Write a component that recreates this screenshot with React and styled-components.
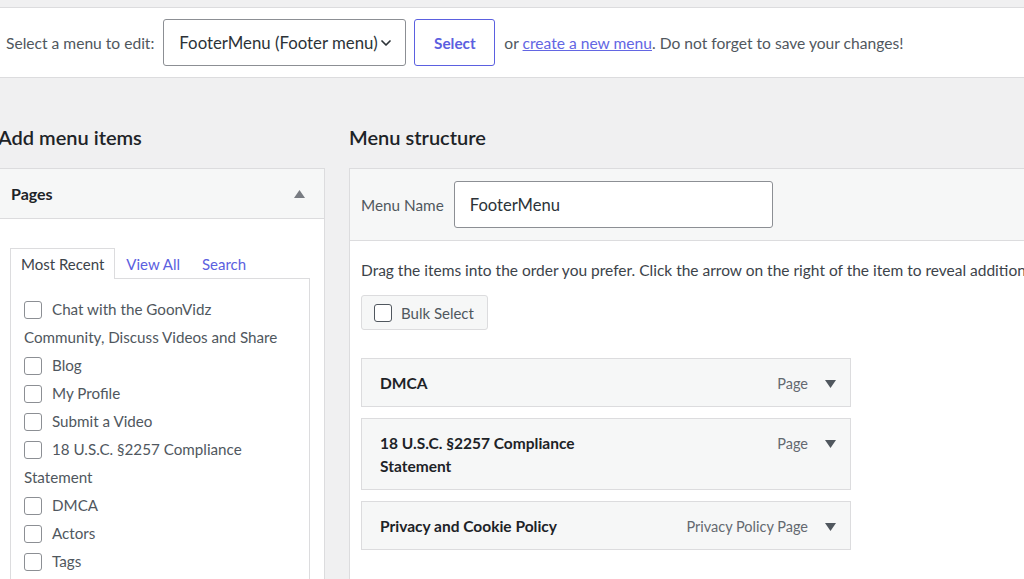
import React from "react";
import styled, { createGlobalStyle } from "styled-components";
import { ChevronDown } from "lucide-react";

const GlobalStyle = createGlobalStyle`
  body {
    margin: 0;
    background: #f0f0f1;
    font-family: Lato, "Noto Sans", sans-serif;
    color: #3c434a;
    overflow: hidden;
  }
`;

const pages = [
  "Chat with the GoonVidz Community, Discuss Videos and Share",
  "Blog",
  "My Profile",
  "Submit a Video",
  "18 U.S.C. §2257 Compliance Statement",
  "DMCA",
  "Actors",
  "Tags",
];

const menuItems = [
  { title: "DMCA", type: "Page" },
  { title: "18 U.S.C. §2257 Compliance Statement", type: "Page" },
  { title: "Privacy and Cookie Policy", type: "Privacy Policy Page" },
];

const Arrow = ({ up, color }) => (
  <svg width="11" height="8" viewBox="0 0 11 8">
    <polygon points={up ? "0,8 11,8 5.5,0" : "0,0 11,0 5.5,8"} fill={color} />
  </svg>
);

const App = () => {
  return (
    <Page>
      <GlobalStyle />
      <ManageBar>
        <BarLabel>Select a menu to edit:</BarLabel>
        <MenuSelect>
          FooterMenu (Footer menu)
          <ChevronDown size={16} strokeWidth={2.6} color="#2c3338" />
        </MenuSelect>
        <OutlineButton>Select</OutlineButton>
        <BarText>
          or <a href="#">create a new menu</a>. Do not forget to save your changes!
        </BarText>
      </ManageBar>

      <Columns>
        <LeftCol>
          <Heading $indent={10}>Add menu items</Heading>
          <Panel>
            <PanelHeader>
              Pages
              <Arrow up color="#787c82" />
            </PanelHeader>
            <PanelBody>
              <Tabs>
                <Tab $active>Most Recent</Tab>
                <Tab>View All</Tab>
                <Tab>Search</Tab>
              </Tabs>
              <TabPanel>
                {pages.map((p) => (
                  <PageRow key={p}>
                    <Check />
                    {p}
                  </PageRow>
                ))}
              </TabPanel>
            </PanelBody>
          </Panel>
        </LeftCol>

        <RightCol>
          <Heading>Menu structure</Heading>
          <MenuPanel>
            <MenuHeader>
              <NameLabel>Menu Name</NameLabel>
              <NameInput>FooterMenu</NameInput>
            </MenuHeader>
            <MenuBody>
              <Hint>
                Drag the items into the order you prefer. Click the arrow on the right of the item to reveal additional configuration options.
              </Hint>
              <BulkButton>
                <Check $dark />
                Bulk Select
              </BulkButton>
              <ItemList>
                {menuItems.map((m) => (
                  <MenuItem key={m.title}>
                    <ItemTitle>{m.title}</ItemTitle>
                    <ItemControls>
                      <ItemType>{m.type}</ItemType>
                      <Arrow color="#50575e" />
                    </ItemControls>
                  </MenuItem>
                ))}
              </ItemList>
            </MenuBody>
          </MenuPanel>
        </RightCol>
      </Columns>
    </Page>
  );
};

export default App;

const Page = styled.div`
  width: 1024px;
  height: 579px;
  overflow: hidden;
  padding-top: 7px;
  box-sizing: border-box;
`;

const ManageBar = styled.div`
  height: 69px;
  background: #fff;
  border-top: 1px solid #dcdcde;
  border-bottom: 1px solid #dcdcde;
  display: flex;
  align-items: center;
  padding-left: 6px;
  font-size: 15.6px;
`;

const BarLabel = styled.span`
  color: #50575e;
  margin-right: 9px;
`;

const MenuSelect = styled.div`
  width: 243px;
  height: 47px;
  box-sizing: border-box;
  border: 1px solid #8c8f94;
  border-radius: 3px;
  display: flex;
  align-items: center;
  justify-content: space-between;
  padding: 0 11px 0 15px;
  font-size: 16.8px;
  color: #2c3338;
`;

const OutlineButton = styled.button`
  width: 81px;
  height: 47px;
  margin-left: 8px;
  background: #fff;
  border: 1px solid #5b60e0;
  border-radius: 3px;
  color: #5b60e0;
  font-family: inherit;
  font-size: 15.3px;
  font-weight: 700;
`;

const BarText = styled.span`
  margin-left: 9px;
  color: #50575e;

  a {
    color: #6366e3;
  }
`;

const Columns = styled.div`
  display: flex;
  gap: 24px;
  margin-left: -12px;
`;

const LeftCol = styled.div`
  width: 337px;
  flex-shrink: 0;
`;

const RightCol = styled.div`
  width: 800px;
  flex-shrink: 0;
`;

const Heading = styled.h2`
  margin: 0;
  padding: 45px 0 17px ${(p) => p.$indent || 0}px;
  height: 28px;
  line-height: 28px;
  font-size: 20px;
  font-weight: 600;
  color: #1d2327;
`;

const Panel = styled.div`
  background: #fff;
  border: 1px solid #dcdcde;
  height: 460px;
`;

const PanelHeader = styled.div`
  height: 49px;
  background: #f6f7f7;
  border-bottom: 1px solid #dcdcde;
  display: flex;
  align-items: center;
  justify-content: space-between;
  padding: 0 19px 0 22px;
  font-size: 16px;
  font-weight: 700;
  color: #1d2327;
`;

const PanelBody = styled.div`
  padding: 29px 14px 0 21px;
`;

const Tabs = styled.div`
  display: flex;
  height: 31px;
`;

const Tab = styled.div`
  position: relative;
  z-index: 1;
  height: ${(p) => (p.$active ? "31px" : "30px")};
  line-height: 30px;
  padding: 0 10px;
  box-sizing: border-box;
  font-size: 15px;
  background: ${(p) => (p.$active ? "#fff" : "transparent")};
  border: 1px solid ${(p) => (p.$active ? "#dcdcde" : "transparent")};
  border-bottom: none;
  color: ${(p) => (p.$active ? "#3c434a" : "#5b60e0")};
`;

const TabPanel = styled.div`
  margin-top: -1px;
  border: 1px solid #dcdcde;
  padding: 16px 25px 0 13px;
  height: 400px;
`;

const PageRow = styled.div`
  font-size: 15.2px;
  line-height: 28px;
  color: #50575e;
`;

const Check = styled.span`
  display: inline-block;
  width: 18px;
  height: 18px;
  box-sizing: border-box;
  border: 1px solid ${(p) => (p.$dark ? "#50575e" : "#8c8f94")};
  border-radius: 3px;
  background: #fff;
  vertical-align: -4px;
  margin-right: 10px;
`;

const MenuPanel = styled.div`
  background: #fff;
  border: 1px solid #dcdcde;
  height: 460px;
`;

const MenuHeader = styled.div`
  height: 71px;
  background: #f6f7f7;
  border-bottom: 1px solid #dcdcde;
  display: flex;
  align-items: center;
  padding-left: 11px;
`;

const NameLabel = styled.span`
  font-size: 15.3px;
  color: #50575e;
  margin-right: 10px;
`;

const NameInput = styled.div`
  width: 319px;
  height: 47px;
  box-sizing: border-box;
  background: #fff;
  border: 1px solid #8c8f94;
  border-radius: 3px;
  display: flex;
  align-items: center;
  padding-left: 15px;
  font-size: 16.6px;
  color: #2c3338;
`;

const MenuBody = styled.div`
  padding: 18px 11px 0;
`;

const Hint = styled.p`
  margin: 0;
  font-size: 15.5px;
  line-height: 22px;
  white-space: nowrap;
  color: #3c434a;
`;

const BulkButton = styled.div`
  margin-top: 14px;
  width: 127px;
  height: 35px;
  box-sizing: border-box;
  background: #f6f7f7;
  border: 1px solid #dcdcde;
  border-radius: 3px;
  display: flex;
  align-items: center;
  padding-left: 12px;
  font-size: 15px;
  color: #50575e;

  span {
    margin-right: 9px;
  }
`;

const ItemList = styled.div`
  margin-top: 28px;
  width: 490px;
  display: flex;
  flex-direction: column;
  gap: 11px;
`;

const MenuItem = styled.div`
  background: #f6f7f7;
  border: 1px solid #dcdcde;
  padding: 13px 14px 11px 18px;
  display: flex;
  justify-content: space-between;
  align-items: flex-start;
`;

const ItemTitle = styled.div`
  max-width: 230px;
  font-size: 15.5px;
  font-weight: 700;
  line-height: 23px;
  color: #1d2327;
`;

const ItemControls = styled.div`
  display: flex;
  align-items: center;
  gap: 17px;
  height: 23px;
`;

const ItemType = styled.span`
  font-size: 14.5px;
  color: #646970;
`;
